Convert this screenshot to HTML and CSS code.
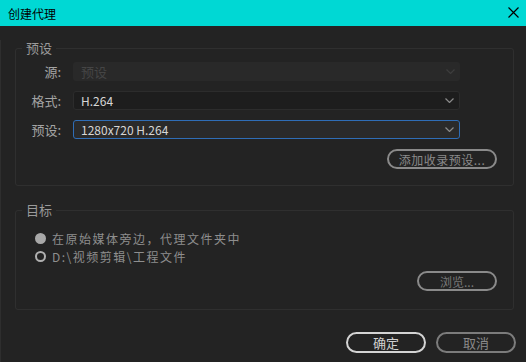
FILE: index.html
```html
<!DOCTYPE html>
<html lang="zh-CN">
<head>
  <meta charset="UTF-8">
  <title>创建代理</title>
  <link rel="stylesheet" href="styles.css">
</head>
<body>

  <!-- Thanh tiêu đề -->
  <div class="title-bar">
    <span>创建代理</span>
    <svg class="close" width="11" height="11" viewBox="0 0 11 11">
      <path d="M0.5 0.5 L10.5 10.5 M10.5 0.5 L0.5 10.5" stroke="#000" stroke-width="1.2"/>
    </svg>
  </div>

  <div class="window">
    <fieldset class="group preset">
      <legend>预设</legend>

      <div class="row">
        <label>源:</label>
        <div class="select disabled">
          <span>预设</span>
          <svg width="9" height="5" viewBox="0 0 9 5"><path d="M0.5 0.5 L4.5 4.5 L8.5 0.5" fill="none" stroke="#3d3d3d" stroke-width="1.2"/></svg>
        </div>
      </div>
      <div class="row">
        <label>格式:</label>
        <div class="select dark">
          <span>H.264</span>
          <svg width="9" height="5" viewBox="0 0 9 5"><path d="M0.5 0.5 L4.5 4.5 L8.5 0.5" fill="none" stroke="#8a8a8a" stroke-width="1.2"/></svg>
        </div>
      </div>
      <div class="row">
        <label>预设:</label>
        <div class="select focus">
          <span>1280x720 H.264</span>
          <svg width="9" height="5" viewBox="0 0 9 5"><path d="M0.5 0.5 L4.5 4.5 L8.5 0.5" fill="none" stroke="#8a8a8a" stroke-width="1.2"/></svg>
        </div>
      </div>

      <div class="actions">
        <div class="btn add">添加收录预设...</div>
      </div>
    </fieldset>

    <fieldset class="group target">
      <legend>目标</legend>

      <div class="radio">
        <span class="dot on"></span>
        <span>在原始媒体旁边，代理文件夹中</span>
      </div>
      <div class="radio">
        <span class="dot"></span>
        <span>D:\视频剪辑\工程文件</span>
      </div>

      <div class="actions">
        <div class="btn browse">浏览...</div>
      </div>
    </fieldset>

    <div class="footer">
      <div class="btn ok">确定</div>
      <div class="btn cancel">取消</div>
    </div>
  </div>

</body>
</html>
```

FILE: styles.css
```css
body {
  margin: 0;
  padding: 0;
  width: 526px;
  height: 362px;
  overflow: hidden;
  background: #232323;
  font-family: "Noto Sans CJK SC", "Liberation Sans", sans-serif;
  font-size: 12px;
}

/* Thanh tiêu đề */
.title-bar {
  height: 26px;
  background: #00d8d4;
  display: flex;
  align-items: center;
  justify-content: space-between;
  padding: 0 7px 0 8px;
  color: #000;
  font-size: 12px;
}
.title-bar .close {
  margin-top: -1px;
}

.window {
  height: 336px;
  border-left: 1px solid #2e2e2e;
  box-sizing: border-box;
}

/* Nhóm */
.group {
  margin: 14px 12px 0 14px;
  padding: 6px 6px 16px 6px;
  border: 1px solid #2f2f2f;
  border-radius: 3px;
}
.group legend {
  padding: 0 4px;
  color: #9a9a9a;
  font-size: 13px;
  line-height: 16px;
}

.row {
  display: flex;
  align-items: center;
  height: 19px;
  margin-bottom: 10px;
}
.row label {
  width: 39px;
  text-align: right;
  color: #a4a4a4;
  font-size: 13px;
  margin-right: 12px;
}
.select {
  width: 387px;
  height: 19px;
  box-sizing: border-box;
  border-radius: 3px;
  display: flex;
  align-items: center;
  justify-content: space-between;
  padding: 0 5px 0 8px;
  color: #d6d6d6;
  font-size: 12px;
}
.select.disabled {
  background: #292929;
  color: #454545;
  font-size: 13px;
}
.select.dark {
  background: #1d1d1d;
  border: 1px solid #2c2c2c;
  padding-left: 7px;
}
.select.focus {
  background: #2a2a2a;
  border: 1px solid #2f6db6;
  padding-left: 7px;
}

.actions {
  display: flex;
  justify-content: flex-end;
  padding-right: 10px;
}
.preset .actions {
  margin-top: 3px;
}

/* Nút bo tròn */
.btn {
  height: 20px;
  box-sizing: border-box;
  border: 2px solid #8a8a8a;
  border-radius: 10px;
  display: flex;
  align-items: center;
  justify-content: center;
  color: #8a8a8a;
  font-size: 12px;
}
.btn.add {
  width: 110px;
  letter-spacing: 0.5px;
}
.btn.browse {
  width: 80px;
  color: #787878;
  border-color: #8a8a8a;
}

/* Nhóm mục tiêu */
.group.target {
  margin-top: 16px;
  padding-top: 11px;
  padding-bottom: 18px;
}
.radio {
  display: flex;
  align-items: center;
  height: 18px;
  margin-left: 13px;
  color: #8e8e8e;
  letter-spacing: 1.5px;
}
.radio .dot {
  width: 11px;
  height: 11px;
  box-sizing: border-box;
  border-radius: 50%;
  border: 2px solid #b0b0b0;
  margin-right: 6px;
}
.radio .dot.on {
  background: #a8a8a8;
  border-color: #a8a8a8;
}
.target .actions {
  margin-top: 6px;
}

/* Chân trang */
.footer {
  display: flex;
  justify-content: flex-end;
  gap: 10px;
  margin-top: 22px;
  padding-right: 10px;
}
.footer .btn {
  width: 80px;
  height: 21px;
  border-radius: 11px;
  font-size: 13px;
}
.btn.ok {
  border-color: #d4d4d4;
  color: #d0d0d0;
}
.btn.cancel {
  border-color: #7c7c7c;
  color: #8a8a8a;
}
```
